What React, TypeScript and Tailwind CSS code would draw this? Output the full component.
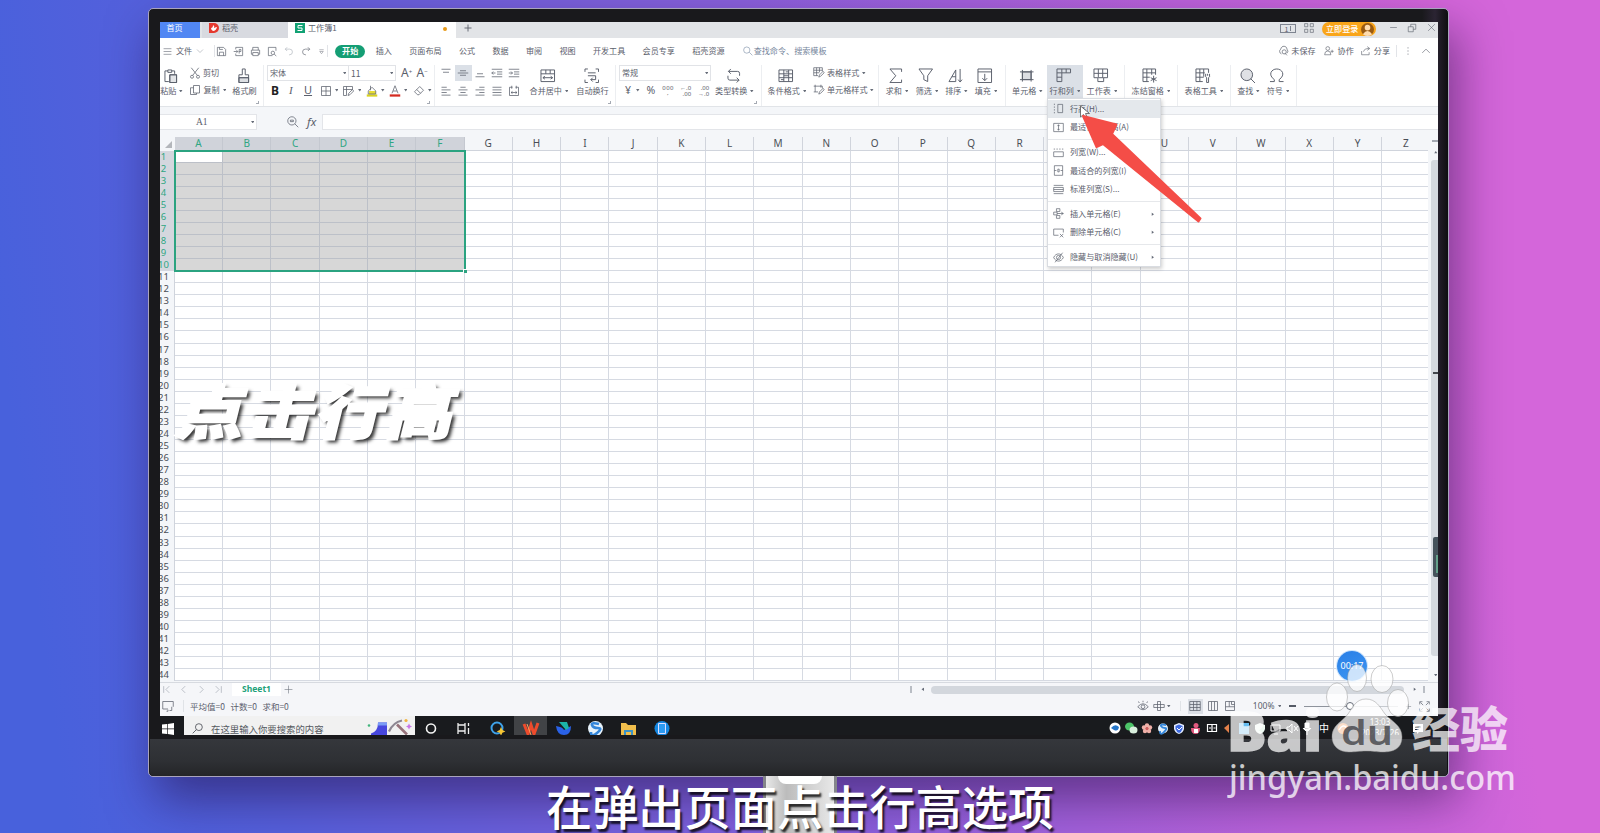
import type { ReactNode } from "react";

const columns = "ABCDEFGHIJKLMNOPQRSTUVWXYZ".split("");
const rows = Array.from({ length: 44 }, (_, i) => i + 1);
const menuTabs = ["插入", "页面布局", "公式", "数据", "审阅", "视图", "开发工具", "会员专享", "稻壳资源"];

interface GlyphProps {
  d: string;
  className?: string;
  fill?: string;
  children?: ReactNode;
}

// 16x16 line icon
function Glyph({ d, className = "size-3", fill = "none", children }: GlyphProps) {
  return (
    <svg viewBox="0 0 16 16" className={`shrink-0 ${className}`} fill={fill} stroke="currentColor" strokeWidth={1}>
      {children}
      <path d={d} />
    </svg>
  );
}

function Caret({ className = "" }: { className?: string }) {
  return (
    <svg viewBox="0 0 4 3" className={`h-[2.5px] w-[3.5px] shrink-0 ${className}`} fill="#666c78">
      <path d="M0 0h4L2 3z" />
    </svg>
  );
}

const icons = {
  save: "M2 2h9l3 3v9H2zM5 14V9h6v5M5 2v3h5",
  pdf: "M4 5V2h10v12H4v-3M1 8h6M5 6l2 2-2 2M9 11V5h2.5v3H9",
  print: "M4 6V2h8v4M4 12H2V6h12v6h-2M4 9.500h8V14H4z",
  preview: "M13 7V2H2v12h6M11 10a2.500 2.500 0 1 0-5 0 2.500 2.500 0 1 0 5 0M10.500 12l3 2.500",
  undo: "M5 2 2 5l3 3M2 5h7a4.500 4.500 0 0 1 0 9H8",
  redo: "M11 2l3 3-3 3M14 5H7a4.500 4.500 0 0 0 0 9h1",
  more: "M3 4h10M4 8h8l-4 5z",
  paste: "M5 3H2v11h4M9 3h3v3M5 2h4v2.500H5zM7 7h7v8H7z",
  cut: "M3 1l8 10M13 1 5 11M6 13a2 2 0 1 0-4 0 2 2 0 1 0 4 0M14 13a2 2 0 1 0-4 0 2 2 0 1 0 4 0",
  copy: "M6 2h8v10H6zM6 5H2v9h8v-2",
  brush: "M6.500 1h3v6H13v8H3V7h3.500zM3 10h10",
  border: "M2 2h12v12H2zM8 2v12M2 8h12",
  cellStyle: "M6 14H2V2h12v4M2 6h12M6 2v12M8 14l1-3 5-5 1.500 2-5 5z",
  eraser: "M6 13 2 9l7-7 5 5-6 6zM5 6l5 5",
  topAlign: "M2 3h12M4 7h8",
  midAlign: "M4 5h8M1 8h14M4 11h8",
  bottomAlign: "M4 9h8M2 13h12",
  outdent: "M1 3h14M8 6.500h7M8 9.500h7M1 13h14M6 8H1m2-2L1 8l2 2",
  indent: "M1 3h14M8 6.500h7M8 9.500h7M1 13h14M1 8h5M4 6l2 2-2 2",
  left: "M2 3h7M2 6.500h12M2 10h7M2 13.500h12",
  center: "M4.500 3h7M2 6.500h12M4.500 10h7M2 13.500h12",
  right: "M7 3h7M2 6.500h12M7 10h7M2 13.500h12",
  justify: "M2 3h12M2 6.500h12M2 10h12M2 13.500h12",
  distribute: "M6 3H2v11h12V3h-4M5 1v4M11 1v4M4 10h8M6 8.500 4 10l2 1.500M10 8.500l2 1.500-2 1.500",
  merge: "M1 2h14v12H1zM1 6h14M6 2v4M10.500 2v4M3 10h10M5 8.500 3 10l2 1.500M11 8.500l2 1.500-2 1.500",
  wrap: "M4 1H1v3M12 1h3v3M4 15H1v-3M12 15h3v-3M4 5h8M4 8h8v4H7M9 10l-2 2 2 2",
  convert: "M5 1 2.500 3.500 5 6M2.500 3.500H12a2 2 0 0 1 2 2V8M11 10l2.500 2.500L11 15M13.500 12.500H4a2 2 0 0 1-2-2V8",
  condition: "M1 2h14v12H1zM1 6h14M1 10h14M6 2v12M11 2v12M6 8h5M3 12h3M8 4h3",
  tableStyle: "M1 1h12v5M1 1v11h6M1 4.500h12M1 8h8M5 1v11M9 1v6M8 14l1-3 5-5 1.500 2-5 5z",
  unitStyle: "M3 1v10M1 3h12v3M11 1v4M1 11h6M8 14l1-3 5-5 1.500 2-5 5z",
  sum: "M14 4V1H2l6 7-6 7h12v-3",
  filter: "M1 1h14l-5 7v6l-4-2V8z",
  sort: "M1 14 8 2v12zM4 9h4M12.500 1v13M10.500 12l2 2.500 2-2.500",
  fill: "M1 1h14v14H1zM1 4h14M8 6v7M5.500 10.500 8 13l2.500-2.500",
  cell: "M1 4h14M1 12h14M3.500 2v12M12.500 2v12",
  rowCol: "M1 1h14v4H6v9H1zM1 5h5M1 9.500h5M6 1v4M10.500 1v4",
  sheet: "M1 1h14v9h-4v4H5v-4H1zM1 5.500h14M5.500 1v9h5.500M10 1v9",
  freeze: "M7 14H1V1h13v6M1 5h13M1 9.500h7M5 1v13M10 1v6M12 8v7M9 10l6 3M15 10l-6 3",
  tableTool: "M8 14H1V1h13v4M1 5h9M1 9.500h8M5 1v13M9 1v8M11 6v3l1 1v5h2v-5l1-1V6M13 6v2",
  omega: "M1 14h4.500v-2C-1.500 7 2.500 1 8 1s9.500 6 2.500 11v2H15",
};

interface BigButtonProps {
  label: string;
  icon: string;
  className: string;
  caret?: boolean;
  tinted?: ReactNode;
}

function BigButton({ label, icon, className, caret = true, tinted }: BigButtonProps) {
  return (
    <div className={`flex h-[33px] shrink-0 flex-col items-center pt-[2.5px] ${className}`}>
      <Glyph d={icon} className="mr-[2px] size-[15.5px]">
        {tinted}
      </Glyph>
      <div className="mt-[2px] flex items-center gap-[3px] leading-[12px]">
        {label}
        {caret ? <Caret /> : null}
      </div>
    </div>
  );
}

function Group({ className, corner, children }: { className: string; corner?: boolean; children: ReactNode }) {
  return (
    <div className={`relative flex h-[41px] shrink-0 border-r border-[#eceef1] ${className}`}>
      {children}
      {corner ? <i className="absolute right-[4px] bottom-[2px] size-[3px] border-r border-b border-[#a5aab3]" /> : null}
    </div>
  );
}

const menuSections = [
  [
    { label: "行高(H)...", icon: "M2 1v2M2 5v2M2 9v2M2 13v2M7 2h7v12H7z" },
    { label: "最适合的行高(A)", icon: "M1 2h14v12H1zM8 4v8M6.500 6 8 4l1.500 2M6.500 10 8 12l1.500-2" },
  ],
  [
    { label: "列宽(W)...", icon: "M1 3h2M5 3h2M9 3h2M13 3h2M1 7h14v7H1z" },
    { label: "最适合的列宽(I)", icon: "M2 1h12v14H2zM2 8h3M14 8h-3M7 6h2v4H7z" },
    { label: "标准列宽(S)...", icon: "M1 2h14M1 5h14v6H1zM1 8h14M1 14h14" },
  ],
  [
    { label: "插入单元格(E)", icon: "M5 1h5v4H5zM1 6h5v4H1zM5 11h5v4H5zM6 8h9M12 6l3 2-3 2", sub: true },
    { label: "删除单元格(C)", icon: "M8 12H1V3h14v5M10 10l5 5M15 10l-5 5", sub: true },
  ],
  [{ label: "隐藏与取消隐藏(U)", icon: "M1 8c3-7 11-7 14 0-3 7-11 7-14 0M14 1 3 15M11 8a3 3 0 1 0-6 0 3 3 0 1 0 6 0", sub: true }],
];

function RowColMenu() {
  return (
    <div className="absolute top-[33px] left-[41px] z-20 w-[114px] border border-[#d9dce1] bg-white pt-[0.6px] shadow-[1px_2px_4px_rgba(0,0,0,0.2)]">
      {menuSections.map((section, s) => (
        <div key={s} className={s ? "mt-[2.5px] border-t border-[#e6e8eb] pt-[2.5px]" : ""}>
          {section.map((item, i) => (
            <div
              key={item.label}
              className={`flex h-[18.6px] items-center pr-[6px] pl-[5px] ${s === 0 && i === 0 ? "bg-[#e4e8ec]" : ""}`}
            >
              <Glyph d={item.icon} className="size-[11px]" />
              <span className="ml-[6px] flex-1 whitespace-nowrap">{item.label}</span>
              {"sub" in item ? <Caret className="-rotate-90" /> : null}
            </div>
          ))}
        </div>
      ))}
    </div>
  );
}

function TitleBar() {
  return (
    <div className="flex h-[16px] shrink-0 items-stretch bg-[#e2e4e7] leading-[12px]">
      <div className="w-[40px] bg-[#5187f3] pl-[6.500px] text-white">首页</div>
      <div className="ml-[2px] flex w-[86px] bg-[#d8dae0] pl-[7px]">
        <svg viewBox="0 0 10 10" className="mt-px size-[10px]">
          <path d="M0 0h5a5 5 0 0 1 0 10H0z" fill="#e5392f" />
          <path d="M2 5q2 0 2-3 2 1 1 3 2-1 3-1-1 4-4 4-2-1-2-3" fill="#fff" />
        </svg>
        <span className="ml-[3px]">稻壳</span>
      </div>
      <div className="flex w-[168px] bg-white pl-[7px]">
        <svg viewBox="0 0 10 10" className="mt-px size-[10px]">
          <path d="M0 0h10v10H0z" fill="#12a274" />
          <path d="M7.500 2.500h-4.500v2.500h4v2.500H2.500" fill="none" stroke="#fff" />
        </svg>
        <span className="ml-[3px] w-[135px]">工作簿1</span>
        <i className="mt-[4.500px] size-[4px] rounded-full bg-[#e89a18]" />
      </div>
      <Glyph d="M8 1v14M1 8h14" className="mt-[2px] ml-[8px] size-[8px] stroke-[1.8]" />
      <div className="ml-auto flex pt-px">
        <div className="mt-px flex h-[9px] w-[16px] items-center justify-center border border-[#7e8490] text-[7px]">
          1<i className="ml-[2px] h-[5px] w-px bg-[#7e8490]" />
        </div>
        <Glyph d="M1 1h5v5H1zM10 1h5v5h-5zM1 10h5v5H1zM10 10h5v5h-5z" className="ml-[8px] size-[10px]" />
        <div className="-mt-px ml-[8px] flex h-[14px] w-[54px] items-center rounded-full bg-[#f9a51a] pl-[4px] font-medium text-white">
          立即登录
          <svg viewBox="0 0 14 14" className="ml-[3px] size-[13px]">
            <circle cx="7" cy="7" r="7" fill="#9a5b12" />
            <circle cx="7" cy="5" r="3" fill="#ffdcae" />
            <path d="M2 12q5-7 10 0-5 4-10 0" fill="#ffdcae" />
          </svg>
        </div>
        <Glyph d="M2 8h12" className="ml-[13px] size-[9px]" />
        <Glyph d="M2 6h8v8H2zM6 6V2h8v8h-4" className="ml-[9px] size-[10px]" />
        <Glyph d="M2 2l12 12M14 2 2 14" className="mr-[2px] ml-[10px] size-[9px]" />
      </div>
    </div>
  );
}

function MenuBar() {
  return (
    <div className="flex h-[26px] shrink-0 items-center bg-white whitespace-nowrap">
      <Glyph d="M1 3h14M1 8h14M1 13h14" className="ml-[3px] size-[9px]" />
      <span className="ml-[4px]">文件</span>
      <Glyph d="M2 5l6 6 6-6" className="ml-[4px] size-[8px] text-[#8a909a]" />
      <i className="ml-[10px] h-[12px] w-px bg-[#e2e4e8]" />
      <div className="flex w-[112px] items-center gap-[6px] pl-px">
        <Glyph d={icons.save} className="size-[11px]" />
        <Glyph d={icons.pdf} className="size-[11px]" />
        <Glyph d={icons.print} className="size-[11px]" />
        <Glyph d={icons.preview} className="size-[11px]" />
        <Glyph d={icons.undo} className="size-[10px] text-[#aab0b8]" />
        <Glyph d={icons.redo} className="ml-px size-[10px]" />
        <Glyph d={icons.more} className="ml-px size-[7px]" />
      </div>
      <i className="h-[12px] w-px bg-[#e2e4e8]" />
      <span className="ml-[7px] flex h-[13px] w-[30px] items-center justify-center rounded-full bg-[#149e74] font-bold text-white">
        开始
      </span>
      <div className="ml-[10.5px] flex gap-[17.3px]">
        {menuTabs.map((tab) => (
          <span key={tab}>{tab}</span>
        ))}
      </div>
      <Glyph d="M11 6.500a5 5 0 1 0-10 0 5 5 0 1 0 10 0M10 10l5 5" className="ml-[18px] size-[10px] text-[#7e90a8]" />
      <span className="ml-px text-[#76869c]">查找命令、搜索模板</span>
      <div className="ml-auto flex items-center">
        <Glyph d="M5 13a4 4 0 0 1-1-7c1-6 9-5 9 0q3 3 0 6M12 10a3 3 0 1 0-6 0 3 3 0 1 0 6 0M10 12l3 3" className="size-[11px]" />
        <span className="ml-[2px]">未保存</span>
        <Glyph d="M9 4a3 3 0 1 0-6 0 3 3 0 1 0 6 0M1 14q0-6 5-6t5 6zM13 6v5M10.500 8.500h5" className="ml-[8px] size-[10px]" />
        <span className="ml-[4px]">协作</span>
        <Glyph d="M1 8v6h12v-4M4 9q1-5 9-5M10 1l4 3-4 3" className="ml-[7px] size-[10px]" />
        <span className="ml-[3px]">分享</span>
        <i className="ml-[6px] h-[12px] w-px bg-[#e2e4e8]" />
        <Glyph d="M8 2v2M8 7v2M8 12v2" className="ml-[6px] size-[10px]" />
        <Glyph d="M2 11l6-6 6 6" className="mr-[7px] ml-[8px] size-[10px]" />
      </div>
    </div>
  );
}

const rowOneAlign = [icons.topAlign, icons.midAlign, icons.bottomAlign, icons.outdent, icons.indent];
const rowTwoAlign = [icons.left, icons.center, icons.right, icons.justify, icons.distribute];

function Ribbon() {
  return (
    <div className="relative flex h-[43px] shrink-0 border-b border-[#e1e4e8] bg-white pt-px whitespace-nowrap">
      <Group className="w-[104px]" corner>
        <BigButton label="粘贴" icon={icons.paste} className="-ml-px w-[25px]" tinted={<path d="M7 7h7v8H7z" fill="#e3e5e8" />} />
        <div className="w-[45px] pl-[5px]">
          <div className="flex h-[16px] items-center">
            <Glyph d={icons.cut} className="mr-[2px] size-[12px]" />
            剪切
          </div>
          <div className="flex h-[18px] items-center">
            <Glyph d={icons.copy} className="mr-[2.500px] size-[12px]" />
            复制
            <Caret className="ml-[3px]" />
          </div>
        </div>
        <BigButton label="格式刷" icon={icons.brush} className="w-[31px]" caret={false} tinted={<path d="M3 10h10v5H3z" fill="#dcdee2" />} />
      </Group>
      <Group className="w-[171px]" corner>
        <div className="pl-[3px]">
          <div className="flex h-[16px] items-center">
            <div className="flex h-[16px] w-[82px] items-center justify-between border border-[#e1e3e7] px-[2px]">
              宋体
              <Caret />
            </div>
            <div className="flex h-[16px] w-[47px] items-center justify-between border border-l-0 border-[#e1e3e7] px-[2px] text-[8.500px]">
              11
              <Caret />
            </div>
            <span className="ml-[5px] font-[Noto_Sans] text-[12px]">
              A<sup className="text-[6px]">+</sup>
            </span>
            <span className="ml-[4.500px] font-[Noto_Sans] text-[12px]">
              A<sup className="text-[6px]">−</sup>
            </span>
          </div>
          <div className="flex h-[19px] items-center font-[Noto_Sans] text-[11px]">
            <b className="ml-[4px] w-[18px] text-[12px] text-[#222]">B</b>
            <i className="w-[15px] font-[Liberation_Serif]">I</i>
            <span className="w-[16px] underline">U</span>
            <Glyph d={icons.border} className="size-[12px]" />
            <Caret className="ml-[2.500px]" />
            <Glyph d={icons.cellStyle} className="ml-[4px] size-[12px]" />
            <Caret className="ml-[3.500px]" />
            <Glyph d="M3 8 8 3l5 5v4H3zM6 1v6" className="ml-[5px] size-[12px]">
              <path d="M1 12.500h14v3H1z" fill="#d9d321" stroke="none" />
              <path d="M4 8h9v4H4z" fill="#e6dc34" stroke="none" />
            </Glyph>
            <Caret className="ml-[3px]" />
            <Glyph d="M4 11 8 1l4 10M5.500 8h5" className="ml-[4px] size-[12px]">
              <path d="M1 12.500h14v3H1z" fill="#d42a20" stroke="none" />
            </Glyph>
            <Caret className="ml-[3px]" />
            <Glyph d={icons.eraser} className="ml-[6px] size-[12px]" />
            <Caret className="ml-[3px]" />
          </div>
        </div>
      </Group>
      <Group className="w-[181px]" corner>
        <div className="w-[91px] pl-[3px]">
          <div className="flex h-[16px]">
            {rowOneAlign.map((d, i) => (
              <span key={i} className={`flex w-[16.8px] items-center justify-center ${i === 1 ? "bg-[#dbe0e7]" : ""}`}>
                <Glyph d={d} className="size-[12px]" />
              </span>
            ))}
          </div>
          <div className="flex h-[19px]">
            {rowTwoAlign.map((d, i) => (
              <span key={i} className="flex w-[16.8px] items-center justify-center">
                <Glyph d={d} className="size-[12px]" />
              </span>
            ))}
          </div>
        </div>
        <BigButton label="合并居中" icon={icons.merge} className="w-[46px]" />
        <BigButton label="自动换行" icon={icons.wrap} className="w-[41px]" caret={false} />
      </Group>
      <Group className="w-[146px]" corner>
        <div className="w-[95px] pl-[3px]">
          <div className="flex h-[16px] items-center justify-between border border-[#e1e3e7] px-[2px]">
            常规
            <Caret />
          </div>
          <div className="flex h-[19px] items-center font-[Noto_Sans]">
            <span className="ml-[6px] text-[10.500px]">¥</span>
            <Caret className="ml-[5px]" />
            <span className="ml-[7px] text-[10.500px]">%</span>
            <span className="ml-[7px] flex flex-col items-center text-[6px] leading-[5px] tracking-[0.5px]">
              000<span>,</span>
            </span>
            <span className="ml-[6px] flex flex-col items-end text-[6px] leading-[6px]">
              ←.0<span>.00</span>
            </span>
            <span className="ml-[7px] flex flex-col items-end text-[6px] leading-[6px]">
              .00<span>→.0</span>
            </span>
          </div>
        </div>
        <BigButton label="类型转换" icon={icons.convert} className="w-[47px]" />
      </Group>
      <Group className="w-[117px]">
        <BigButton label="条件格式" icon={icons.condition} className="ml-[2px] w-[46px]" />
        <div className="pl-[3px]">
          <div className="flex h-[16px] items-center">
            <Glyph d={icons.tableStyle} className="mr-[2.500px] size-[11.5px]" />
            表格样式
            <Caret className="ml-[3px]" />
          </div>
          <div className="flex h-[18px] items-center">
            <Glyph d={icons.unitStyle} className="mr-[2.500px] size-[11.5px]" />
            单元格样式
            <Caret className="ml-[3px]" />
          </div>
        </div>
      </Group>
      <Group className="w-[127px]">
        <BigButton label="求和" icon={icons.sum} className="ml-[3px] w-[30px]" />
        <BigButton label="筛选" icon={icons.filter} className="w-[30px]" />
        <BigButton label="排序" icon={icons.sort} className="w-[29px]" />
        <BigButton label="填充" icon={icons.fill} className="w-[30px]" />
      </Group>
      <Group className="w-[119px]">
        <BigButton label="单元格" icon={icons.cell} className="ml-[2px] w-[39px]" tinted={<path d="M3.500 4h9v8h-9z" fill="#dddfe3" />} />
        <BigButton label="行和列" icon={icons.rowCol} className="w-[36px] bg-[#dbe0e7]" />
        <BigButton label="工作表" icon={icons.sheet} className="w-[38px]" />
        <RowColMenu />
      </Group>
      <Group className="w-[53px]">
        <BigButton label="冻结窗格" icon={icons.freeze} className="w-full" />
      </Group>
      <Group className="w-[53px]">
        <BigButton label="表格工具" icon={icons.tableTool} className="w-full" />
      </Group>
      <Group className="w-[66px]">
        <BigButton
          label="查找"
          icon="M11 11l4.500 4.500"
          className="ml-[3px] w-[29px]"
          tinted={<circle cx="7" cy="7" r="6" fill="#dfe1e5" />}
        />
        <BigButton label="符号" icon={icons.omega} className="w-[30px]" />
      </Group>
    </div>
  );
}

function FormulaBar() {
  return (
    <div className="flex h-[30px] shrink-0 items-start bg-[#f4f6f9] pt-[7px]">
      <div className="flex h-[16px] w-[97px] items-center border border-l-0 border-[#e3e5e9] bg-white pr-[2px]">
        <span className="flex-1 pt-px pr-[7px] text-center font-[Liberation_Serif] text-[9.500px]">A1</span>
        <Caret />
      </div>
      <Glyph
        d="M12 6.500a5.500 5.500 0 1 0-11 0 5.500 5.500 0 1 0 11 0M10.500 10.500 15 15M4.500 5.500h4v2h-4z"
        className="mt-[2px] ml-[30px] size-[12px]"
      />
      <i className="ml-[8px] w-[15px] font-[Noto_Sans] text-[11.500px] leading-[16px]">fx</i>
      <div className="h-[16px] flex-1 border border-r-0 border-[#e3e5e9] bg-white" />
    </div>
  );
}

function Sheet() {
  return (
    <div className="flex h-[545px] shrink-0 bg-[#f4f6f9]">
      <div className="relative w-[1268px] shrink-0 overflow-hidden font-[Noto_Sans] text-[9.500px]">
        <div className="flex h-[13.500px] w-[1272px]">
          <div className="flex w-[14.8px] shrink-0 items-end justify-end pr-[3px] pb-[3px]">
            <svg viewBox="0 0 8 8" className="size-[7px]" fill="#b3b6bb">
              <path d="M8 0v8H0z" />
            </svg>
          </div>
          {columns.map((name, i) => (
            <div
              key={name}
              className={`flex w-[48.3px] shrink-0 items-center justify-center border-r border-b text-[10px] leading-none ${
                i < 6 ? "border-[#c4c8d0] bg-[#d0d3da] text-[#2fa682]" : "border-[#d0d4dc] text-[#4a4e56]"
              }`}
            >
              {name}
            </div>
          ))}
        </div>
        {rows.map((row) => (
          <div key={row} className="flex h-[12.07px] w-[1272px]">
            <div className={`w-[14.8px] shrink-0 border-r border-[#d0d4dc] ${row <= 10 ? "bg-[#d4d7de]" : ""}`}>
              <div className={`-ml-[7px] w-[21px] text-center leading-[12px] ${row <= 10 ? "text-[#2fa682]" : "text-[#4a4e56]"}`}>
                {row}
              </div>
            </div>
            {columns.map((name, i) => (
              <div
                key={name}
                className={`w-[48.3px] shrink-0 border-r border-b ${
                  row > 10 || i > 5
                    ? "border-[#d6dae2] bg-white"
                    : row === 1 && i === 0
                      ? "border-[#bcc0c8] bg-white"
                      : "border-[#bcc0c8] bg-[#d7d7d7]"
                }`}
              />
            ))}
          </div>
        ))}
        {/* selection A1:F10 */}
        <div className="absolute top-[12.5px] left-[13.500px] h-[122px] w-[292px] border-2 border-[#2ba380]">
          <i className="absolute -right-[3px] -bottom-[3px] size-[4px] border-t border-l border-white bg-[#2ba380]" />
        </div>
      </div>
      <div className="relative flex w-[10px] flex-col items-end">
        <i className="mt-[3px] h-[2px] w-[6px] bg-[#a4a9b2]" />
        <Caret className="mt-[9px] mr-px rotate-180" />
        <div className="mt-[6px] h-[496px] w-[7px] rounded-l-[3px] bg-[#d5d9df]" />
        <Caret className="mt-[18px] mr-px" />
        <i className="absolute top-[235px] right-0 h-[2px] w-[5px] bg-[#43464c]" />
        <div className="absolute top-[400px] right-0 flex h-[40px] w-[5px] items-center justify-end rounded-l-[2px] bg-[#46535c]">
          <i className="mt-[14px] h-[18px] w-[2px] bg-[#64a08a]" />
        </div>
      </div>
    </div>
  );
}

function SheetTabs() {
  return (
    <div className="flex h-[15px] shrink-0 items-center border-t border-[#d7dae0] bg-[#f5f6f9] pb-px text-[#aeb3bb]">
      <Glyph d="M3 2v12M13 2 7 8l6 6" className="ml-[2px] size-[9px] stroke-[1.4]" />
      <Glyph d="M11 2 5 8l6 6" className="ml-[8px] size-[9px] stroke-[1.4]" />
      <Glyph d="M5 2l6 6-6 6" className="ml-[9px] size-[9px] stroke-[1.4]" />
      <Glyph d="M3 2l6 6-6 6M13 2v12" className="ml-[8px] size-[9px] stroke-[1.4]" />
      <div className="ml-[9px] flex h-full w-[49px] items-center justify-center bg-white font-[Noto_Sans] text-[8.500px] font-bold text-[#21a179]">
        Sheet1
      </div>
      <Glyph d="M8 1v14M1 8h14" className="ml-[3px] size-[9px] text-[#6a707b]" />
      <div className="ml-auto flex items-center">
        <i className="h-[7px] w-[2px] bg-[#b9bdc4]" />
        <Caret className="ml-[9px] rotate-90" />
        <div className="ml-[6px] h-[8px] w-[473px] rounded-full bg-[#d3d7dd]" />
        <Caret className="ml-[9px] -rotate-90" />
        <i className="mr-[13px] ml-[7px] h-[7px] w-[2px] bg-[#b9bdc4]" />
      </div>
    </div>
  );
}

function StatusBar() {
  return (
    <div className="flex h-[19px] shrink-0 items-center bg-[#f5f6f9] pb-px">
      <Glyph d="M8 12H1V2h14v7M6 15h2v-2M13 9v5h-3" className="ml-[2px] size-[12px]" />
      <i className="ml-[9px] h-[12px] w-px bg-[#e0e3e7]" />
      <span className="ml-[6px] flex gap-[5.5px] text-[8.500px]">
        <span>平均值=0</span>
        <span>计数=0</span>
        <span>求和=0</span>
      </span>
      <div className="ml-auto flex items-center">
        <Glyph d="M1 9q7-8 14 0-7 8-14 0M10.500 9a2.500 2.500 0 1 0-5 0 2.500 2.500 0 1 0 5 0M3 4 2 2M8 3V1M13 4l1-2" className="size-[12px]" />
        <Glyph d="M6 2h4v12H6zM1 6h14v4H1z" className="ml-[4px] size-[12px]" />
        <Caret className="ml-[2px]" />
        <i className="ml-[9px] h-[10px] w-px bg-[#e0e3e7]" />
        <span className="ml-[7px] flex size-[15px] items-center justify-center bg-[#dbdfe6]">
          <Glyph d="M1 2h14v12H1zM1 6h14M1 10h14M6 2v12M10.500 2v12" />
        </span>
        <Glyph d="M2 2h12v12H2zM6 2v12M10 2v12" className="ml-[4px] size-[12px]" />
        <Glyph d="M2 2h12v12H2zM2 9h5V2M7 9h7M10 2v4h4" className="ml-[5px] size-[12px]" />
        <span className="ml-[17px] font-[Noto_Sans] text-[8.500px]">100%</span>
        <Caret className="ml-[3px]" />
        <i className="ml-[8px] h-[2px] w-[7px] bg-[#555b66]" />
        <div className="ml-[8px] flex w-[94px] items-center">
          <i className="h-px w-[42px] bg-[#8e939c]" />
          <i className="size-[8px] rounded-full border border-[#666c78] bg-white" />
          <i className="h-px flex-1 bg-[#c6cad0]" />
        </div>
        <Glyph d="M8 2v12M2 8h12" className="ml-[7px] size-[7px]" />
        <Glyph d="M1 5V1h4M11 1h4v4M15 11v4h-4M5 15H1v-4M2 2l4 4M14 2l-4 4M14 14l-4-4M2 14l4-4" className="mr-[8px] ml-[7px] size-[11px]" />
      </div>
    </div>
  );
}

function TaskBar() {
  return (
    <div className="flex h-[20px] shrink-0 items-stretch overflow-hidden bg-[#191b1e] text-white">
      <svg viewBox="0 0 12 12" className="mt-[7px] ml-[2px] size-[12px]" fill="#fff">
        <path d="M0 1.500 5 1v4.500H0zM5.700.9 12 0v5.500H5.700zM0 6.200h5V11l-5-.6zM5.700 6.200H12V12l-6.300-.9z" />
      </svg>
      <div className="ml-[10px] flex w-[231px] items-start bg-[#f1f1f1] pt-[6px] text-[9.400px] leading-[15px] text-[#55595f]">
        <Glyph d="M15 6a5 5 0 1 0-10 0 5 5 0 1 0 10 0M6.500 9.500 1 15" className="mt-px ml-[8px] size-[11px] stroke-[1.3]" />
        <span className="ml-[8px] w-[156px]">在这里输入你要搜索的内容</span>
        <svg viewBox="0 0 46 16" className="-mt-[4px] h-[17px] w-[46px]">
          <circle cx="2" cy="7" r="1.300" fill="#42b57c" />
          <path d="M11 4h9v14H4v-3q7-2 7-11" fill="#4747de" />
          <path d="M11 4h9v3h-9z" fill="#7b9cf5" />
          <path d="M30 6 40 16" fill="none" stroke="#97737b" strokeWidth="2.600" />
          <path d="M22 13q4-9 13-11" fill="none" stroke="#8d8792" strokeWidth="2.200" />
          <circle cx="39" cy="2" r="1.600" fill="#f1b441" />
          <path d="m42 5 1 2 2 1-2 1-1 2-1-2-2-1 2-1z" fill="#c873e6" />
        </svg>
      </div>
      <svg viewBox="0 0 290 19" className="h-[19px] w-[290px]">
        <circle cx="16" cy="12.500" r="4.500" fill="none" stroke="#f4f4f4" strokeWidth="1.600" />
        <path d="M43 7v11M43 9h7M43 15h7M50 7v11M53.500 7v3M53.500 12v6" stroke="#eee" fill="none" strokeWidth="1.300" />
        <circle cx="82" cy="12" r="5.500" fill="none" stroke="#3ea2ea" strokeWidth="2" />
        <path d="m86 11 1.400 3 3 1.400-3 1.300-1.400 3-1.300-3-3-1.300 3-1.400z" fill="#f7c634" />
        <path d="M99 0h33v20H99z" fill="#414346" />
        <path d="m109 8 4 10 3-9 3 9 4-11" fill="none" stroke="#ee4b2c" strokeWidth="3" />
        <path d="m112 8 4 11" stroke="#fda05a" strokeWidth="1" />
        <path d="M141 10q7 1 8 4l7-4q0 9-7 9t-8-9" fill="#2a62e8" />
        <path d="M144 6h8l2 6-3 2z" fill="#1bb4a8" />
        <circle cx="180.500" cy="12.500" r="7.500" fill="#e8f3fb" />
        <path d="M184 8q-8-2-7 1t6 3-1 5-6-1" fill="none" stroke="#3486da" strokeWidth="2.600" />
        <path d="M206 7h5l2 2h8v10h-15z" fill="#f0be4c" />
        <path d="M209 14h9v5h-2v-3h-5v3h-2z" fill="#3b94c8" />
        <circle cx="247" cy="12.500" r="7.500" fill="#1587e0" />
        <path d="M243.500 7.500h7v10h-7z" fill="#2c9af0" stroke="#ddf" />
      </svg>
      <svg viewBox="0 0 330 19" className="ml-auto h-[19px] w-[330px] shrink-0">
        <circle cx="7" cy="12" r="5.500" fill="#fff" />
        <path d="M3 12q4-5 8-1-1 5-5 3" fill="#2575c8" />
        <ellipse cx="21.500" cy="10.500" rx="4.500" ry="4" fill="#4cc468" />
        <ellipse cx="25.500" cy="14" rx="4" ry="3.500" fill="#d9efdd" />
        <g fill="#f0b0a8">
          <circle cx="39" cy="9.500" r="2.200" />
          <circle cx="42" cy="11.500" r="2.200" />
          <circle cx="41" cy="15" r="2.200" />
          <circle cx="37" cy="15" r="2.200" />
          <circle cx="36" cy="11.500" r="2.200" />
        </g>
        <circle cx="39" cy="12.500" r="1.500" fill="#d25d5d" />
        <circle cx="55" cy="12.500" r="5" fill="#e4f0fb" />
        <path d="M58 9q-6-1-5 1t4 2-1 4-4-1" fill="none" stroke="#3486da" strokeWidth="1.800" />
        <path d="m71 7 5 2v4q-1 4-5 5-4-1-5-5V9z" fill="#e6eeff" />
        <path d="m71 8.500 3.500 1.500v3q-1 3-3.500 4-2.500-1-3.500-4v-3z" fill="#3e6ae0" />
        <path d="m69 12 2 2 3-3" fill="none" stroke="#fff" />
        <circle cx="88" cy="9.500" r="2.500" fill="#e25a80" />
        <path d="M83 12h9q0 6-4.500 6T83 12" fill="#e25a80" />
        <path d="M86 13h4v4h-4z" fill="#fff" />
        <path d="M99.500 8.500h9v7h-9zM104 8.500v7M101 12h2M105.500 12h2" fill="none" stroke="#fff" strokeWidth="1.200" />
        <path d="m121 8-5 4 5 5z" fill="#e4804a" />
        <path d="M131 7h10v11h-10z" fill="#65bcf0" />
        <path d="m152 7 5 2v4q-1 4-5 5-4-1-5-5V9z" fill="#eefaf2" />
        <path d="M163 9h9v6h-9zM166 18h4" fill="none" stroke="#fff" />
        <path d="M179 11h2l3-3v9l-3-3h-2zM186 10l4 5M190 10l-4 5" fill="none" stroke="#fff" />
        <path d="M197 7h4v6h-4zM195 12q4 6 8 0M199 15v4" fill="#fff" stroke="#fff" />
        <text x="216" y="16" textAnchor="middle" fontSize="10" fill="#fff">
          中
        </text>
        <circle cx="235" cy="12.500" r="5.500" fill="#ee7e2c" />
        <path d="M231 14q4-7 8-2" fill="none" stroke="#fff" strokeWidth="1.500" />
        <text x="272" y="9" textAnchor="middle" fontSize="8" fill="#fff" className="font-[Noto_Sans]">
          13:03
        </text>
        <text x="272" y="20" textAnchor="middle" fontSize="8" fill="#fff" className="font-[Noto_Sans]">
          2023/7/26
        </text>
        <path d="M305 8h10v8h-4l-2 2v-2h-4z" fill="#fff" />
        <path d="M307 11h6M307 13.500h4" stroke="#333" />
      </svg>
    </div>
  );
}

function Watermark() {
  return (
    <div className="absolute top-[660px] left-[1224px] z-30 w-[300px] text-white/75">
      <svg viewBox="0 0 300 98" className="h-[98px] w-[300px]">
        <g fill="#fff" fillOpacity="0.75" stroke="#8e8e8e" strokeOpacity="0.45">
          <ellipse cx="133" cy="18" rx="9.500" ry="13.500" />
          <ellipse cx="158" cy="19" rx="11" ry="13.500" />
          <ellipse cx="113" cy="37" rx="10.500" ry="14" />
          <ellipse cx="174" cy="43" rx="10.500" ry="13.500" />
          <path d="M142 39c10 0 14 8 19 15 6 7 17 11 17 23s-9 15-19 15c-7 0-10-1-17-1s-10 1-17 1c-10 0-17-6-17-15 0-12 10-15 16-23 5-7 8-15 18-15z" />
        </g>
        <g className="font-[Noto_Sans] font-black" fill="#fff" stroke="#fff" strokeWidth="1.500" opacity="0.73">
          <text x="3" y="90.500" fontSize="54" textLength="95" lengthAdjust="spacingAndGlyphs">
            Bai
          </text>
        </g>
        <text
          x="117"
          y="85"
          fontSize="35"
          textLength="52"
          lengthAdjust="spacingAndGlyphs"
          fill="#4b4c50"
          fillOpacity="0.85"
          className="font-[Noto_Sans] font-semibold"
        >
          du
        </text>
        <text
          x="188"
          y="87"
          fontSize="48"
          textLength="96"
          fill="#fff"
          fillOpacity="0.72"
          className="font-['Noto_Sans_CJK_SC'] font-black"
        >
          经验
        </text>
      </svg>
      <div className="-mt-px ml-[5px] w-max origin-left scale-x-[0.943] font-[Noto_Sans] text-[34.500px] leading-[40px] font-medium whitespace-nowrap">
        jingyan.baidu.com
      </div>
    </div>
  );
}

export default function App() {
  return (
    <div className="relative h-[833px] w-[1600px] overflow-hidden bg-[linear-gradient(82deg,#4861dc_4%,#5560dc_16%,#8a60dc_50%,#bd62da_76%,#d466da_90%)] font-['Noto_Sans','Noto_Sans_CJK_SC',sans-serif]">
      <div className="absolute top-[776px] left-[763px] h-[57px] w-[74px] border-x-[3px] border-[#84858a] bg-[linear-gradient(90deg,#e8e8e8,#bcbcbc_30%,#cfcfcf_60%,#e8e8e8)]">
        <div className="mx-auto h-[8px] w-[44px] rounded-b-[8px] bg-white" />
      </div>
      <div className="mt-[8px] ml-[148px] flex h-[769px] w-[1301px] flex-col rounded-[5px] border border-[#a9a4bd] bg-[linear-gradient(90deg,#19191c_98%,#2b2433_99%,#0e0e10)] pt-[13px] pr-[11px] pl-[11px] shadow-[8px_22px_48px_rgba(30,8,60,0.5)]">
        <div className="flex h-[713px] w-[1278px] shrink-0 flex-col overflow-hidden bg-white font-['Noto_Sans_CJK_SC',sans-serif] text-[8.100px] text-[#5b606c]">
          <TitleBar />
          <MenuBar />
          <Ribbon />
          <FormulaBar />
          <Sheet />
          <SheetTabs />
          <StatusBar />
          <TaskBar />
        </div>
        <div className="mt-[4px] -mr-[10px] -ml-[10px] flex-1 rounded-b-[4px] bg-[linear-gradient(#35373c,#2e3034_60%,#242528)]" />
      </div>

      <svg viewBox="0 0 130 125" className="absolute top-[104px] left-[1078px] z-30 h-[125px] w-[130px]">
        <path d="M2.500 2v11l3-2.500 2 4.500 2-1-2-4.500h4z" fill="#fff" stroke="#555" strokeWidth="0.800" />
        <path
          d="M5 12 38.500 20.500 34 30l88.500 84.500-2 3L25 40l-6.500 3z"
          fill="#f44d47"
          stroke="#f44d47"
          strokeWidth="2"
          strokeLinejoin="round"
        />
      </svg>

      <div className="absolute top-[651px] left-[1337px] flex size-[30px] items-center justify-center rounded-full bg-[linear-gradient(160deg,#2a7fe6,#3d97f3)] text-[9px] text-white shadow-[0_0_0_1px_#cfe4fb]">
        00:17
      </div>

      <div className="absolute top-[367px] left-[180px] -skew-x-12 scale-y-[0.86] font-['Noto_Sans_CJK_SC'] text-[68px] leading-[84px] font-black tracking-[2px] whitespace-nowrap text-white [-webkit-text-stroke:2px_white] [text-shadow:4px_4px_4px_rgba(0,0,0,0.8)]">
        点击行高
      </div>
      <div className="absolute top-[772px] left-[546px] z-30 font-['Noto_Sans_CJK_SC'] text-[46.200px] leading-[66px] font-medium whitespace-nowrap text-white [text-shadow:2px_3px_2px_rgba(0,0,0,0.8)]">
        在弹出页面点击行高选项
      </div>
      <Watermark />
    </div>
  );
}
